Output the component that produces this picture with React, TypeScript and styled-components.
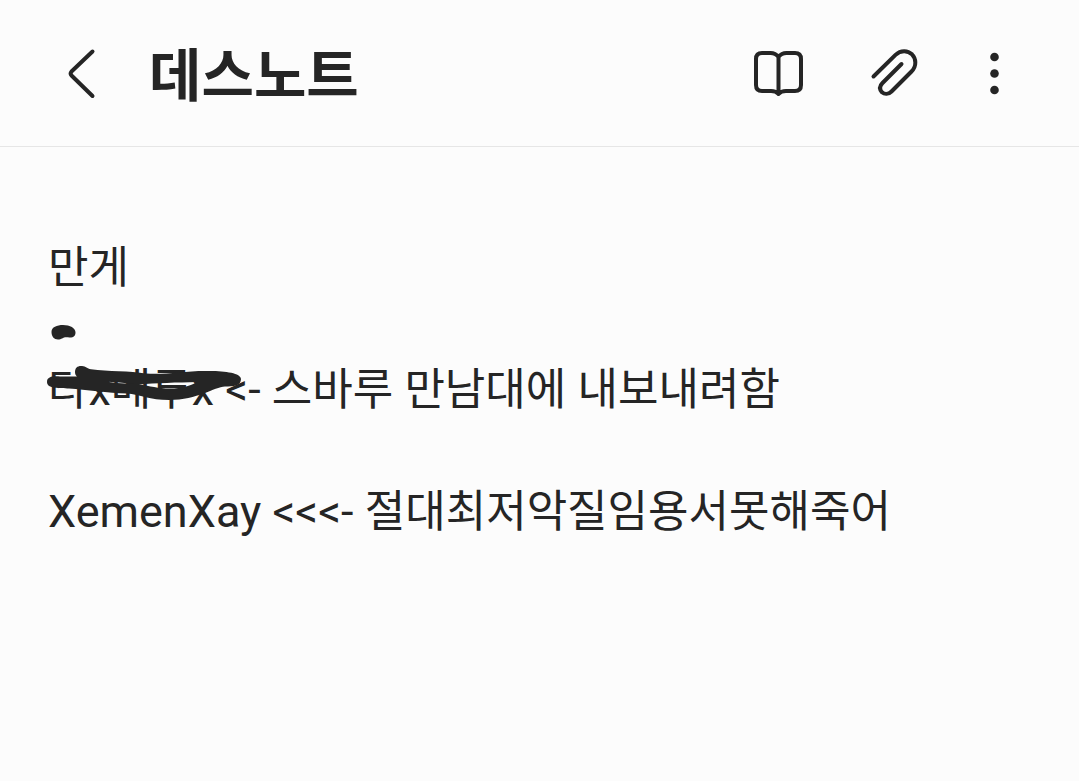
import React from "react";
import styled, { createGlobalStyle } from "styled-components";

const Global = createGlobalStyle`
  * { box-sizing: border-box; }
  body {
    margin: 0;
    background: #fcfcfc;
    color: #252525;
    font-family: Roboto, "Noto Sans CJK KR", sans-serif;
  }
`;

const Header = styled.header`
  display: flex;
  align-items: center;
  height: 147px;
  padding: 0 67px 0 56px;
  border-bottom: 1px solid #e6e6e6;
`;

const IconButton = styled.button<{ $width: number }>`
  display: flex;
  flex: none;
  align-items: center;
  justify-content: center;
  width: ${(p) => p.$width}px;
  height: 52px;
  padding: 0;
  border: 0;
  background: none;
  color: inherit;
  cursor: pointer;
`;

const Icon = styled.svg`
  display: block;
  height: 52px;
  fill: none;
  stroke: currentColor;
  stroke-width: 4;
  stroke-linecap: round;
  stroke-linejoin: round;
`;

const Title = styled.h1`
  flex: 1;
  margin: 0 0 0 41px;
  padding-top: 8px;
  font-size: 57px;
  line-height: 80px;
  font-weight: 700;
`;

const Actions = styled.div`
  display: flex;
  gap: 48px;
`;

const Note = styled.main`
  padding: 90px 48px;
  font-size: 45px;
  line-height: 61px;
`;

const Line = styled.p`
  margin: 0;
  min-height: 61px;
`;

const Hangul = styled.span`
  font-size: 44px;
  line-height: 1;
`;

const Struck = styled.span`
  position: relative;
  display: inline-block;
`;

const Scribble = styled.svg`
  position: absolute;
  left: -8px;
  top: -49px;
  width: 210px;
  height: 100px;
  pointer-events: none;
`;

/* Hangul runs are set a little smaller than the Latin text around them. */
function Mixed({ text }: { text: string }) {
  return (
    <>
      {text.split(/([가-힣]+)/).map((run, i) =>
        i % 2 ? <Hangul key={i}>{run}</Hangul> : run
      )}
    </>
  );
}

export default function App() {
  return (
    <>
      <Global />
      <Header>
        <IconButton $width={52} aria-label="Back">
          <Icon width="52" viewBox="56 47 52 52">
            <path d="M92.500 51.500 L71.500 71.500 Q69.800 73.500 71.500 75.500 L92.500 96" />
          </Icon>
        </IconButton>
        <Title>데스노트</Title>
        <Actions>
          <IconButton $width={68} aria-label="Reading mode">
            <Icon width="52" viewBox="752 47 52 52">
              <path d="M778.500 57 Q775.500 53 770.500 53 H762 Q756 53 756 59 V85 Q756 91 762 91 H771 Q776 91 778.500 94 Q781 91 786 91 H795 Q801 91 801 85 V59 Q801 53 795 53 H786.500 Q781.500 53 778.500 57 V94" />
            </Icon>
          </IconButton>
          <IconButton $width={68} aria-label="Attach">
            <Icon width="52" viewBox="868 47 52 52">
              <path d="M873.500 76.500 L895.500 54.800 C901 49.500 908 50.500 912 54.300 C916 58.300 917 66 911.500 71.500 L891.500 91.500 C888.500 94.500 884.500 94.500 882 92.300 C879.500 89.500 879.500 86 882.500 83 L901.500 64" />
            </Icon>
          </IconButton>
          <IconButton $width={36} aria-label="More options">
            <Icon width="36" viewBox="976 47 36 52">
              <g fill="currentColor" stroke="none">
                <circle cx="994.500" cy="57" r="4.300" />
                <circle cx="994.500" cy="73.500" r="4.300" />
                <circle cx="994.500" cy="90" r="4.300" />
              </g>
            </Icon>
          </IconButton>
        </Actions>
      </Header>
      <Note>
        <Line>
          <Mixed text="만게" />
        </Line>
        <Line />
        <Line>
          <Struck>
            <Mixed text="타x메루x" />
            <Scribble viewBox="40 310 210 100" fill="currentColor" aria-hidden="true">
              <path d="M51.500 332 C51.500 327 57 325 63 325 C70 325 75.500 328 75.500 332.500 C75.500 337 72 338 68 337.300 C63 336.500 62 339.500 58 339.500 C54 339.500 51.500 336.500 51.500 332 Z" />
              <path
                fillRule="evenodd"
                d="M75 372 C75 367.500 78 365.500 82 366 C86 366.500 87 368.500 91 369.300 C108 371.500 130 371 146 373.500 C164 375 184 371 205 371 C222 370.500 241 372.500 241 379 C241 386 233 386.500 225 386.500 C214 387 198 400 169 400 C150 400 140 394.500 127 393.500 C108 393 86 389.500 69 388.500 C60 388 47 389 47 382 C47 376.500 53 376 60 376.500 L77 376.500 C75.500 375 75 374 75 372 Z
                M107 381.700 L117 382.200 L134 384 L117 382.900 Z
                M139 384.500 C155 383 178 382.500 197 382 C190 386 182 388.500 170 388.500 C158 388.500 150 386 139 384.500 Z"
              />
            </Scribble>
          </Struck>
          <Mixed text=" <- 스바루 만남대에 내보내려함" />
        </Line>
        <Line />
        <Line>
          <Mixed text="XemenXay <<<- 절대최저악질임용서못해죽어" />
        </Line>
      </Note>
    </>
  );
}
